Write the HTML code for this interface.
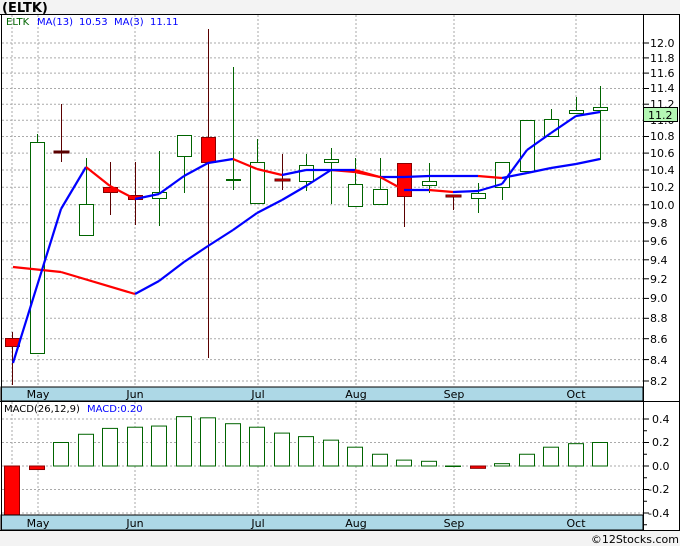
<!DOCTYPE html>
<html><head><meta charset="utf-8"><style>
html,body{margin:0;padding:0;background:#fff;}
body{width:680px;height:546px;overflow:hidden;position:relative;font-family:"DejaVu Sans","Liberation Sans",sans-serif;}
svg{position:absolute;left:0;top:0;}
text{font-family:"DejaVu Sans","Liberation Sans",sans-serif;}
</style></head><body>
<svg id="s" width="680" height="546" viewBox="0 0 680 546" xmlns="http://www.w3.org/2000/svg">
<rect x="0" y="0" width="680" height="14" fill="#f3f3f3"/>
<rect x="0" y="531" width="680" height="15" fill="#f3f3f3"/>
<g id="grid"></g>
<g id="cand"></g>
<g id="ma"></g>
<g id="macd"></g>
<rect x="1" y="387" width="642" height="14" fill="#add8e6" stroke="#000" stroke-width="1"/>
<rect x="1" y="515" width="642" height="15" fill="#add8e6" stroke="#000" stroke-width="1"/>
<line x1="0" y1="14.5" x2="680" y2="14.5" stroke="#000"/>
<line x1="0" y1="401.5" x2="680" y2="401.5" stroke="#000"/>
<line x1="0" y1="530.5" x2="680" y2="530.5" stroke="#000"/>
<line x1="1.5" y1="14" x2="1.5" y2="531" stroke="#000"/>
<line x1="643.5" y1="14" x2="643.5" y2="531" stroke="#000"/>
<line x1="679.5" y1="14" x2="679.5" y2="531" stroke="#000"/>
<g id="ticks"></g>
<text x="2" y="12" font-size="13" font-weight="bold" fill="#000">(ELTK)</text>
<text x="6" y="25" font-size="10" fill="#006400">ELTK</text>
<text x="37" y="25" font-size="10" fill="#0000ff">MA(13)</text>
<text x="79" y="25" font-size="10" fill="#0000ff">10.53</text>
<text x="114" y="25" font-size="10" fill="#0000ff">MA(3)</text>
<text x="150" y="25" font-size="10" fill="#0000ff">11.11</text>
<text x="4" y="412" font-size="10" fill="#000">MACD(26,12,9)</text>
<text x="87" y="412" font-size="10" fill="#0000ff">MACD:0.20</text>
<g font-size="11" fill="#000" text-anchor="middle">
<text x="38" y="398">May</text><text x="135" y="398">Jun</text><text x="258" y="398">Jul</text><text x="356" y="398">Aug</text><text x="454" y="398">Sep</text><text x="576" y="398">Oct</text>
<text x="38" y="527">May</text><text x="135" y="527">Jun</text><text x="258" y="527">Jul</text><text x="356" y="527">Aug</text><text x="454" y="527">Sep</text><text x="576" y="527">Oct</text>
</g>
<g font-size="11" fill="#000">
<text x="650" y="47">12.0</text><text x="650" y="62">11.8</text><text x="650" y="77">11.6</text><text x="650" y="92">11.4</text><text x="650" y="108">11.2</text><text x="650" y="124">11.0</text><text x="650" y="140">10.8</text><text x="650" y="157">10.6</text><text x="650" y="174">10.4</text><text x="650" y="191">10.2</text><text x="650" y="209">10.0</text><text x="650" y="227">9.8</text><text x="650" y="245">9.6</text><text x="650" y="264">9.4</text><text x="650" y="283">9.2</text><text x="650" y="302">9.0</text><text x="650" y="322">8.8</text><text x="650" y="343">8.6</text><text x="650" y="364">8.4</text><text x="650" y="385">8.2</text>
<text x="652" y="423">0.4</text><text x="652" y="446">0.2</text><text x="652" y="470">0.0</text><text x="648" y="493">-0.2</text><text x="648" y="517">-0.4</text>
</g>
<rect x="643.5" y="107.5" width="34" height="14" fill="#b4f7b4" stroke="#000"/>
<text x="648" y="119" font-size="11" fill="#000">11.2</text>
<text x="679" y="543" font-size="11" fill="#000" text-anchor="end">©12Stocks.com</text>
</svg>
<script>
var NS="http://www.w3.org/2000/svg";
function el(p,t,a){var e=document.createElementNS(NS,t);for(var k in a)e.setAttribute(k,a[k]);document.getElementById(p).appendChild(e);return e;}
[43,57.9,73.1,88.5,104.2,120.2,136.5,153.1,170,187.3,204.8,222.8,241.1,259.8,278.8,298.4,318.3,338.7,359.6,381].forEach(function(y){el("grid","line",{x1:2,x2:643,y1:y,y2:y,stroke:"#aaa","stroke-dasharray":"2,2"});el("ticks","line",{x1:643,x2:649,y1:y,y2:y,stroke:"#000"});});
for(var i=0;i<5;i++){var y=419+i*23.5;el("grid","line",{x1:2,x2:643,y1:y,y2:y,stroke:"#aaa","stroke-dasharray":"2,2"});el("ticks","line",{x1:643,x2:649,y1:y,y2:y,stroke:"#000"});el("ticks","line",{x1:643,x2:647,y1:y+11.75,y2:y+11.75,stroke:"#000"});}
[12,38,135,258,356,454,576].forEach(function(x){el("grid","line",{x1:x,x2:x,y1:15,y2:387,stroke:"#aaa","stroke-dasharray":"2,2"});el("grid","line",{x1:x,x2:x,y1:402,y2:515,stroke:"#aaa","stroke-dasharray":"2,2"});});
var C=[[12,338,346,332,385,1],[37,142,353,134,353,0],[61,151,153,104,162,2],[86,204,235,158,235,0],[110,187,192,162,215,1],[135,195,199,162,225,1],[159,192,198,151,226,0],[184,135,156,135,193,0],[208,137,162,29,358,1],[233,179,181,67,190,3],[257,162,203,139,203,0],[282,179,181,154,190,2],[306,165,181,154,191,0],[331,159,162,148,204,0],[355,184,206,158,206,0],[380,189,204,158,204,0],[404,163,196,163,227,1],[429,181,185,163,193,0],[453,195,197,196,210,2],[478,193,198,183,213,0],[502,162,187,162,200,0],[527,120,171,120,171,0],[551,119,136,109,136,0],[576,110,113,97,113,0],[600,107,110,86,160,0]];
C.forEach(function(c){var x=c[0],r=c[5];
 var col=(r==1||r==2)?"#5a0000":"#006400";
 el("cand","line",{x1:x+.5,x2:x+.5,y1:c[3],y2:c[4],stroke:col});
 if(r==2){el("cand","rect",{x:x-7,y:c[1],width:15,height:2,fill:(c[0]==282||c[0]==453)?"#f00":"#5a0000",stroke:"#5a0000","stroke-width":1});}
 else if(r==3){el("cand","rect",{x:x-7,y:c[1],width:15,height:2,fill:"#006400"});}
 else el("cand","rect",{x:x-7+.5,y:c[1]+.5,width:14,height:c[2]-c[1],fill:r?"#f00":"#fff",stroke:r?"#8b0000":"#006400"});
});
function seg(pts){for(var i=1;i<pts.length;i++){var a=pts[i-1],b=pts[i];el("ma","line",{x1:a[0],y1:a[1],x2:b[0],y2:b[1],stroke:b[1]>a[1]+0.5?"#f00":"#00f","stroke-width":2.2});}}
seg([[13,267],[61,272],[135,294],[159,281],[184,262],[208,246],[233,230],[257,213],[282,200],[306,186],[331,170],[355,172],[380,177],[404,177],[429,176],[453,176],[478,176],[502,178],[527,173],[551,168],[576,164],[600,159]]);
seg([[13,363],[61,209],[86,167],[110,186],[135,199],[159,194],[184,176],[208,163],[233,159],[257,169],[282,175],[306,170],[331,170],[355,170],[380,177],[404,190],[429,190],[453,192],[478,191],[502,184],[527,150],[551,133],[576,116],[600,112]]);
var M=[-0.42,-0.03,0.2,0.27,0.32,0.33,0.34,0.42,0.41,0.36,0.33,0.28,0.25,0.22,0.16,0.1,0.05,0.04,0.0,-0.02,0.02,0.1,0.16,0.19,0.2];
M.forEach(function(v,i){var x=C[i][0];var h=Math.abs(v)*117.5;
 if(v<0){el("macd","rect",{x:x-7.5,y:466,width:15,height:Math.max(h,2),fill:"#f00",stroke:"#8b0000"});}
 else el("macd","rect",{x:x-7.5,y:466-h,width:15,height:Math.max(h,0.5),fill:"#fff",stroke:"#006400"});
});
</script>
</body></html>
